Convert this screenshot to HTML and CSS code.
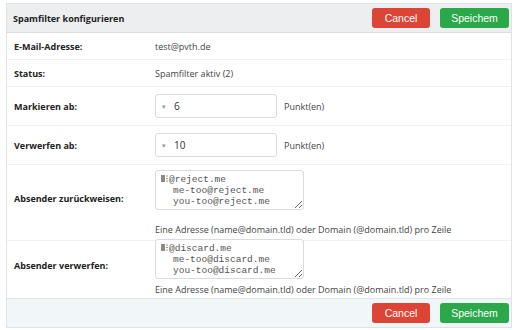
FILE: index.html
```html
<!DOCTYPE html>
<html>
  <head>
    <title>Spamfilter konfigurieren</title>
    <link rel="stylesheet" href="styles.css">
  </head>
  <body>
    <div class="panel">
      <div class="bar head">
        <span class="title">Spamfilter konfigurieren</span>
        <div class="actions">
          <button class="btn cancel">Cancel</button>
          <button class="btn save">Speichem</button>
        </div>
      </div>

      <div class="row short">
        <div class="label">E-Mail-Adresse:</div>
        <div class="value">test@pvth.de</div>
      </div>
      <div class="row short">
        <div class="label">Status:</div>
        <div class="value">Spamfilter aktiv (2)</div>
      </div>
      <div class="row num">
        <div class="label">Markieren ab:</div>
        <div class="value inline">
          <div class="spin"><span class="caret">&#9662;</span><input value="6"></div>
          <span class="unit">Punkt(en)</span>
        </div>
      </div>
      <div class="row num">
        <div class="label">Verwerfen ab:</div>
        <div class="value inline">
          <div class="spin"><span class="caret">&#9662;</span><input value="10"></div>
          <span class="unit">Punkt(en)</span>
        </div>
      </div>
      <div class="row area">
        <div class="label">Absender zurückweisen:</div>
        <div class="value">
          <div class="box">
            <svg class="lines" width="7" height="7" viewBox="0 0 7 7"><rect x="0" y="0" width="4" height="7" fill="#8a8a8a"/><path d="M5 1h2M5 3.5h2M5 6h2" stroke="#9a9a9a" stroke-width="1"/></svg>
            <textarea>@reject.me
me-too@reject.me
you-too@reject.me</textarea>
          </div>
          <div class="help">Eine Adresse (name@domain.tld) oder Domain (@domain.tld) pro Zeile</div>
        </div>
      </div>
      <div class="row area last">
        <div class="label">Absender verwerfen:</div>
        <div class="value">
          <div class="box">
            <svg class="lines" width="7" height="7" viewBox="0 0 7 7"><rect x="0" y="0" width="4" height="7" fill="#8a8a8a"/><path d="M5 1h2M5 3.5h2M5 6h2" stroke="#9a9a9a" stroke-width="1"/></svg>
            <textarea>@discard.me
me-too@discard.me
you-too@discard.me</textarea>
          </div>
          <div class="help">Eine Adresse (name@domain.tld) oder Domain (@domain.tld) pro Zeile</div>
        </div>
      </div>

      <div class="bar foot">
        <div class="actions">
          <button class="btn cancel">Cancel</button>
          <button class="btn save">Speichem</button>
        </div>
      </div>
    </div>
  </body>
</html>
```

FILE: styles.css
```css
body {
  margin: 3px 5px 0 6px;
  background: #fff;
  font-family: "Open Sans", sans-serif;
  font-size: 9px;
  color: #333;
}

.panel {
  border: 1px solid #dfe3e6;
  box-shadow: 0 1px 2px rgba(0, 0, 0, 0.08);
  background: #fff;
}

.bar {
  display: flex;
  align-items: center;
  justify-content: space-between;
  padding: 0 2px 0 6px;
}
.head {
  height: 28px;
  background: #eceef0;
  border-bottom: 1px solid #d9dde0;
}
.foot {
  height: 28px;
  justify-content: flex-end;
  background: #f1f6f9;
  border-top: 1px solid #dfe4e8;
}
.title {
  font-weight: 700;
  color: #222;
}

.actions {
  display: flex;
  gap: 10px;
}
.btn {
  height: 20px;
  border: none;
  border-radius: 3px;
  color: #fff;
  font-family: "Liberation Sans", Arial, sans-serif;
  font-size: 10.5px;
  padding: 0;
}
.cancel {
  width: 58px;
  background: #dc4535;
}
.save {
  width: 69px;
  background: #2aa84a;
}

.row {
  display: grid;
  grid-template-columns: 141px 1fr;
  align-items: center;
  padding: 0 7px;
  border-bottom: 1px solid #eef0f2;
}
.row.short { height: 26px; }
.row.num { height: 38px; }
.row.area { height: 75px; }
.row.area .label { margin-bottom: 9px; }
.row.last {
  height: 57px;
  border-bottom: none;
}

.label {
  font-weight: 700;
  color: #222;
}
.value { color: #444; }
.inline {
  display: flex;
  align-items: center;
  gap: 7px;
}

.spin {
  display: flex;
  align-items: center;
  width: 120px;
  height: 22px;
  border: 1px solid #d8dcdf;
  border-radius: 3px;
}
.caret {
  color: #999;
  font-size: 7px;
  margin: 0 8px 0 6px;
}
.spin input {
  border: none;
  outline: none;
  width: 80px;
  padding: 0;
  font-family: "Open Sans", sans-serif;
  font-size: 10px;
  color: #333;
}

.box {
  position: relative;
  width: 149px;
  height: 40px;
}
.lines {
  position: absolute;
  left: 6px;
  top: 5px;
}
.box textarea {
  box-sizing: border-box;
  width: 149px;
  height: 40px;
  margin: 0;
  padding: 3px 0 0 17px;
  text-indent: -4px;
  border: 1px solid #d8dcdf;
  border-radius: 3px;
  font-family: "Liberation Mono", monospace;
  font-size: 9.5px;
  line-height: 11px;
  color: #555;
  overflow: hidden;
}
.help {
  margin-top: 13px;
}
.row.last .value {
  align-self: start;
  margin-top: -2px;
}
.row.last .help { margin-top: 4px; }
```
